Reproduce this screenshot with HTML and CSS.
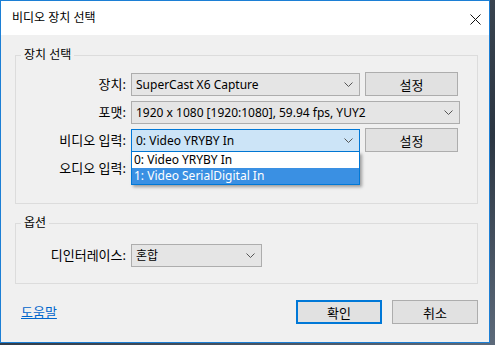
FILE: index.html
```html
<!DOCTYPE html>
<html lang="ko">
<head>
    <meta charset="UTF-8">
    <title>비디오 장치 선택</title>
    <link rel="stylesheet" href="styles.css">
</head>
<body>
    <div class="window">
        <div class="titlebar">
            <span class="title">비디오 장치 선택</span>
            <svg class="close" width="11" height="11" viewBox="0 0 11 11">
                <path d="M0.5 0.5 L10.5 10.5 M10.5 0.5 L0.5 10.5" stroke="#111" stroke-width="1" fill="none"/>
            </svg>
        </div>

        <div class="content">
            <fieldset class="group">
                <legend>장치 선택</legend>
                <div class="form">
                    <label>장치:</label>
                    <div class="combo">
                        <span>SuperCast X6 Capture</span>
                        <svg class="chevron" width="9" height="5" viewBox="0 0 9 5"><path d="M0.5 0.5 L4.5 4.5 L8.5 0.5" stroke="#555" fill="none"/></svg>
                    </div>
                    <button class="btn">설정</button>

                    <label>포맷:</label>
                    <div class="combo wide">
                        <span>1920 x 1080 [1920:1080], 59.94 fps, YUY2</span>
                        <svg class="chevron" width="9" height="5" viewBox="0 0 9 5"><path d="M0.5 0.5 L4.5 4.5 L8.5 0.5" stroke="#555" fill="none"/></svg>
                    </div>

                    <label>비디오 입력:</label>
                    <div class="combo-wrap">
                        <div class="combo open">
                            <span>0: Video YRYBY In</span>
                            <svg class="chevron" width="9" height="5" viewBox="0 0 9 5"><path d="M0.5 0.5 L4.5 4.5 L8.5 0.5" stroke="#555" fill="none"/></svg>
                        </div>
                        <ul class="dropdown">
                            <li>0: Video YRYBY In</li>
                            <li class="selected">1: Video SerialDigital In</li>
                        </ul>
                    </div>
                    <button class="btn">설정</button>

                    <label>오디오 입력:</label>
                    <div class="combo">
                        <span></span>
                    </div>
                </div>
            </fieldset>

            <fieldset class="group options">
                <legend>옵션</legend>
                <div class="form">
                    <label>디인터레이스:</label>
                    <div class="combo short">
                        <span>혼합</span>
                        <svg class="chevron" width="9" height="5" viewBox="0 0 9 5"><path d="M0.5 0.5 L4.5 4.5 L8.5 0.5" stroke="#555" fill="none"/></svg>
                    </div>
                </div>
            </fieldset>

            <div class="footer">
                <a href="#" class="help">도움말</a>
                <div class="actions">
                    <button class="btn default">확인</button>
                    <button class="btn">취소</button>
                </div>
            </div>
        </div>
    </div>
</body>
</html>
```

FILE: styles.css
```css
* {
    box-sizing: border-box;
}
body {
    margin: 0;
    width: 495px;
    height: 345px;
    overflow: hidden;
    font-family: 'Noto Sans', 'Noto Sans CJK KR', sans-serif;
    font-size: 12px;
    color: #000;
    background: linear-gradient(160deg, #4b5560 0%, #2c3642 60%, #5d6a7a 100%);
}
.window {
    width: 490px;
    height: 343px;
    border: 1px solid #1c7fd5;
    background: #f0f0f0;
    display: flex;
    flex-direction: column;
}
.titlebar {
    height: 34px;
    background: #fff;
    display: flex;
    align-items: center;
    justify-content: space-between;
    padding: 0 8px 0 11px;
}
.title {
    line-height: 14px;
}
.close {
    margin-top: 2px;
}
.content {
    flex: 1;
    padding: 0 11px 0 14px;
}
.group {
    margin: 13px 0 0 0;
    padding: 11px 0 23px 0;
    border: 1px solid #dcdcdc;
    min-width: 0;
}
.group legend {
    margin-left: 5px;
    padding: 0 3px;
    line-height: 14px;
}
.options {
    margin-top: 12px;
    padding: 14px 0 16px 0;
}
.form {
    display: grid;
    grid-template-columns: 110px 229px 93px;
    grid-auto-rows: 23px;
    column-gap: 5px;
    row-gap: 5px;
}
.form label {
    grid-column: 1;
    text-align: right;
    align-self: center;
    font-size: 13px;
    line-height: 14px;
    margin-top: -1px;
}
.combo {
    height: 23px;
    border: 1px solid #adadad;
    background: #e5e5e5;
    display: flex;
    align-items: center;
    justify-content: space-between;
    padding: 0 6px 0 4px;
    line-height: 14px;
    white-space: nowrap;
}
.combo.wide {
    grid-column: 2 / 4;
    margin-right: -2px;
}
.combo.short {
    width: 131px;
}
.combo.open {
    background: #cce4f7;
    border-color: #0078d7;
}
.combo-wrap {
    position: relative;
}
.dropdown {
    position: absolute;
    top: 23px;
    left: 0;
    width: 229px;
    margin: 0;
    padding: 0;
    list-style: none;
    background: #fff;
    border: 1px solid #0078d7;
    border-top: none;
    box-shadow: 2px 2px 3px rgba(0, 0, 0, 0.35);
    z-index: 2;
}
.dropdown li {
    height: 16px;
    line-height: 16px;
    padding-left: 2px;
    white-space: nowrap;
}
.dropdown li.selected {
    background: #3a90e3;
    color: #fff;
}
.btn {
    height: 24px;
    border: 1px solid #adadad;
    background: #e1e1e1;
    font-family: inherit;
    font-size: 13px;
    color: #000;
    padding: 0;
    margin-top: -1px;
}
.footer {
    display: flex;
    justify-content: space-between;
    align-items: center;
    margin-top: 16px;
    padding-left: 6px;
}
.help {
    color: #0066cc;
    text-decoration: underline;
    font-size: 13px;
    line-height: 14px;
}
.actions {
    display: flex;
    gap: 10px;
}
.actions .btn {
    width: 86px;
    margin-top: 0;
}
.btn.default {
    border: 2px solid #0078d7;
}
```
